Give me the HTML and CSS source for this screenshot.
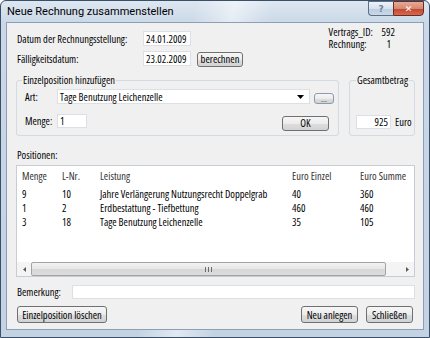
FILE: index.html
```html
<!DOCTYPE html>
<html lang="de">

<head>
  <meta http-equiv="Content-Type" content="text/html; charset=UTF-8">
  <title>Neue Rechnung zusammenstellen</title>
  <link rel="stylesheet" href="styles.css">
</head>

<body>
  <div class="window">
    <div class="titlebar">
      <span class="title">Neue Rechnung zusammenstellen</span>
      <div class="caption-buttons">
        <span class="btn-help">?</span>
        <span class="btn-close">&#x2715;</span>
      </div>
    </div>

    <div class="client">
      <div class="head">
        <div class="dates">
          <div class="date-row">
            <label class="date-label">Datum der Rechnungsstellung:</label>
            <input class="field date" type="text" value="24.01.2009">
          </div>
          <div class="date-row">
            <label class="date-label">Fälligkeitsdatum:</label>
            <input class="field date" type="text" value="23.02.2009">
            <button class="btn btn-calc">berechnen</button>
          </div>
        </div>
        <div class="info">
          <div class="info-line"><span class="info-key">Vertrags_ID:</span><span>592</span></div>
          <div class="info-line"><span class="info-key">Rechnung:</span><span class="info-nr">1</span></div>
        </div>
      </div>

      <div class="groups">
        <fieldset class="group group-item">
          <legend>Einzelposition hinzufügen</legend>
          <div class="item-row">
            <label class="item-label">Art:</label>
            <div class="field combo">
              <span>Tage Benutzung Leichenzelle</span>
              <svg class="combo-arrow" width="7" height="4" viewBox="0 0 7 4"><path d="M0 0h7L3.5 4z" fill="#000"/></svg>
            </div>
            <button class="btn btn-dots">...</button>
          </div>
          <div class="item-row item-row-amount">
            <label class="item-label">Menge:</label>
            <input class="field amount" type="text" value="1">
            <button class="btn btn-ok">OK</button>
          </div>
        </fieldset>

        <fieldset class="group group-total">
          <legend>Gesamtbetrag</legend>
          <div class="total-row">
            <span class="field total">925</span>
            <span>Euro</span>
          </div>
        </fieldset>
      </div>

      <div class="section-label">Positionen:</div>
      <div class="listview">
        <table class="positions">
          <colgroup>
            <col style="width: 40px">
            <col style="width: 38px">
            <col style="width: 192px">
            <col style="width: 68px">
            <col>
          </colgroup>
          <thead>
            <tr><th>Menge</th><th>L-Nr.</th><th>Leistung</th><th>Euro Einzel</th><th>Euro Summe</th></tr>
          </thead>
          <tbody>
            <tr><td>9</td><td>10</td><td>Jahre Verlängerung Nutzungsrecht Doppelgrab</td><td>40</td><td>360</td></tr>
            <tr><td>1</td><td>2</td><td>Erdbestattung - Tiefbettung</td><td>460</td><td>460</td></tr>
            <tr><td>3</td><td>18</td><td>Tage Benutzung Leichenzelle</td><td>35</td><td>105</td></tr>
          </tbody>
        </table>
        <div class="hscroll">
          <span class="scroll-btn">
            <svg width="3" height="5" viewBox="0 0 3 5"><path d="M3 0v5L0 2.5z" fill="#5a5a5a"/></svg>
          </span>
          <span class="scroll-thumb">
            <svg width="7" height="5" viewBox="0 0 7 5"><path d="M0.5 0v5M3.5 0v5M6.5 0v5" stroke="#6b6b6b" stroke-width="1"/></svg>
          </span>
          <span class="scroll-track"></span>
          <span class="scroll-btn">
            <svg width="3" height="5" viewBox="0 0 3 5"><path d="M0 0v5L3 2.5z" fill="#5a5a5a"/></svg>
          </span>
        </div>
      </div>

      <div class="remark-row">
        <label class="remark-label">Bemerkung:</label>
        <input class="field remark" type="text" value="">
      </div>

      <div class="button-row">
        <button class="btn btn-delete">Einzelposition löschen</button>
        <span class="spacer"></span>
        <button class="btn btn-new">Neu anlegen</button>
        <button class="btn btn-close-dlg">Schließen</button>
      </div>
    </div>
  </div>
</body>

</html>
```

FILE: styles.css
```css
* {
  box-sizing: border-box;
}

body {
  margin: 0;
  font-family: "Open Sans", "Liberation Sans", Arial, sans-serif;
  font-stretch: 75%;
  font-size: 10.5px;
  color: #000;
  background: #fff;
}

.window {
  width: 430px;
  height: 338px;
  display: flex;
  flex-direction: column;
  padding: 0 5px 7px 5px;
  border: 1px solid #3b4f68;
  border-radius: 6px 6px 0 0;
  background:
    linear-gradient(100deg, rgba(255, 255, 255, 0) 40%, rgba(255, 255, 255, 0.5) 48%, rgba(255, 255, 255, 0) 56%),
    linear-gradient(180deg, #dde7f1 0, #cad8e7 22px, #c3d3e4 100%);
}

.titlebar {
  height: 21px;
  display: flex;
  justify-content: space-between;
  align-items: flex-start;
}

.title {
  padding: 4px 0 0 1px;
  font-family: Roboto, "Liberation Sans", sans-serif;
  font-size: 11px;
  font-stretch: 100%;
  line-height: 14px;
}

.caption-buttons {
  display: flex;
}

.btn-help,
.btn-close {
  height: 15px;
  display: flex;
  align-items: center;
  justify-content: center;
  border: 1px solid #5d6f86;
  font-family: "DejaVu Sans", sans-serif;
  font-stretch: 100%;
  font-size: 9px;
  font-weight: bold;
}

.btn-help {
  width: 25px;
  border-right: none;
  border-radius: 0 0 0 4px;
  color: #6d7f99;
  background: linear-gradient(180deg, #eef3f9 0, #d6e1ee 50%, #bccde1 51%, #c9d8e9 100%);
}

.btn-close {
  width: 31px;
  border-color: #6b2a22;
  border-radius: 0 0 4px 0;
  color: #fff;
  background: linear-gradient(180deg, #e6a999 0, #d88870 50%, #c4452d 51%, #d36a4f 100%);
}

.client {
  flex: 1;
  display: flex;
  flex-direction: column;
  padding: 0 8px 0 9px;
  border: 1px solid #8c9fb6;
  background: #f0f0f0;
}

.head {
  display: flex;
  justify-content: space-between;
  padding: 3px 0 0 1px;
  height: 43px;
}

.dates {
  padding-top: 5px;
  display: flex;
  flex-direction: column;
  gap: 5px;
}

.date-row {
  display: flex;
  align-items: center;
  height: 15px;
}

.date-label {
  width: 126px;
  white-space: nowrap;
}

.field {
  height: 15px;
  padding: 0 2px;
  border: 1px solid #dcdfe5;
  background: #fff;
  font: inherit;
  color: #000;
  outline: none;
}

.date {
  width: 48px;
}

.btn {
  padding: 0;
  font: inherit;
  color: #000;
  white-space: nowrap;
  border: 1px solid #707070;
  border-radius: 3px;
  background: linear-gradient(180deg, #f6f6f6 0, #ececec 50%, #dedede 51%, #d2d2d2 100%);
}

.btn-calc {
  width: 46px;
  height: 15px;
  margin-left: 6px;
  margin-top: 1px;
  line-height: 12px;
}

.info {
  margin-right: 20px;
  line-height: 12px;
}

.info-line {
  display: flex;
  height: 12px;
  white-space: nowrap;
}

.info-key {
  width: 50px;
  margin-right: 3px;
}

.info-nr {
  padding-left: 5px;
}

.groups {
  display: flex;
  gap: 10px;
  margin-top: 8px;
}

.group {
  margin: 0;
  height: 62px;
  border: 1px solid #d3dbe2;
  border-radius: 3px;
}

.group legend {
  padding: 0 1px;
  line-height: 13px;
  white-space: nowrap;
}

.group-item {
  width: 324px;
  padding: 2px 4px 0 8px;
}

.group-item legend {
  margin-left: -3px;
}

.group-total {
  width: 70px;
  padding: 0 0 0 6px;
}

.item-row {
  display: flex;
  align-items: flex-end;
  height: 15px;
}

.item-label {
  width: 32px;
  align-self: center;
}

.combo {
  width: 253px;
  display: flex;
  align-items: center;
  justify-content: space-between;
  padding: 0 5px 0 2px;
}

.btn-dots {
  width: 20px;
  height: 11px;
  margin-left: 4px;
  font-size: 9px;
  line-height: 6px;
  color: #555;
  border-color: #8a9bb0;
}

.item-row-amount {
  margin-top: 10px;
  height: 16px;
  align-items: flex-start;
}

.item-row-amount .item-label {
  align-self: flex-start;
  line-height: 15px;
}

.amount {
  width: 30px;
  height: 14px;
}

.btn-ok {
  width: 47px;
  height: 15px;
  margin: 2px 5px 0 auto;
  line-height: 13px;
}

.total-row {
  display: flex;
  align-items: center;
  gap: 4px;
  padding-top: 28px;
}

.total {
  width: 35px;
  height: 14px;
  text-align: right;
  line-height: 12px;
}

.section-label {
  margin-top: 13px;
  padding-left: 1px;
  line-height: 13px;
}

.listview {
  margin-top: 3px;
  height: 112px;
  display: flex;
  flex-direction: column;
  border: 1px solid #c7cdd4;
  background: #fff;
}

.positions {
  width: 100%;
  table-layout: fixed;
  border-collapse: collapse;
}

.positions th {
  height: 20px;
  padding: 0 0 1px 5px;
  text-align: left;
  font-weight: normal;
  color: #333;
  white-space: nowrap;
}

.positions td {
  height: 14px;
  padding: 0 0 0 5px;
  line-height: 14px;
  white-space: nowrap;
  overflow: hidden;
}

.positions tbody tr:first-child td {
  padding-top: 1px;
}

.hscroll {
  margin-top: auto;
  height: 14px;
  display: flex;
  align-items: stretch;
  background: #f4f4f4;
}

.scroll-btn {
  width: 14px;
  display: flex;
  align-items: center;
  justify-content: center;
}

.scroll-thumb {
  width: 355px;
  display: flex;
  align-items: center;
  justify-content: center;
  border: 1px solid #a3a3a3;
  border-radius: 2px;
  background: linear-gradient(180deg, #f3f3f3 0, #e6e6e6 50%, #d7d7d7 51%, #dcdcdc 100%);
}

.scroll-track {
  flex: 1;
}

.remark-row {
  display: flex;
  align-items: center;
  margin-top: 8px;
  padding-left: 1px;
}

.remark-label {
  width: 55px;
}

.remark {
  flex: 1;
  height: 14px;
}

.button-row {
  display: flex;
  gap: 8px;
  margin-top: 7px;
  padding-left: 1px;
  padding-right: 2px;
}

.button-row .btn {
  height: 17px;
  line-height: 14px;
}

.spacer {
  flex: 1;
}

.btn-delete {
  width: 90px;
}

.btn-new {
  width: 57px;
}

.btn-close-dlg {
  width: 47px;
}
```
